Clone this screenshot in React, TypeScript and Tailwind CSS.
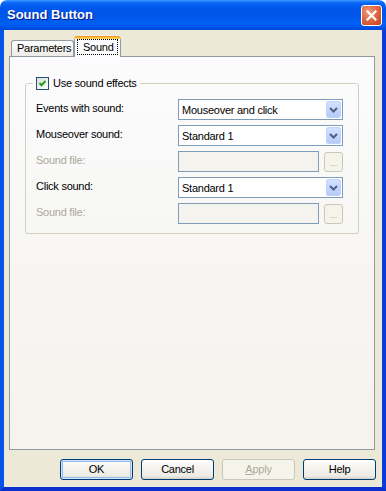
import React from "react";

const font = "font-['Liberation_Sans',Arial,sans-serif]";

function Chevron() {
  return (
    <svg width="9" height="6" viewBox="0 0 9 6">
      <polyline points="1,1 4.5,4.5 8,1" fill="none" stroke="#4D6185" strokeWidth="2" />
    </svg>
  );
}

function Combo({ value }: { value: string }) {
  return (
    <div className="h-[21px] w-[165px] border border-[#7F9DB9] bg-white flex items-center pl-[3px] pr-px">
      <span className="flex-1 text-[11px] leading-[13px] tracking-[-0.25px] text-black pt-[1px]">{value}</span>
      <div className="w-[15px] h-[17px] rounded-[2px] border border-[#C3D3FD] bg-[linear-gradient(to_bottom,#D4E1FE,#B6CBF9)] flex items-center justify-center">
        <Chevron />
      </div>
    </div>
  );
}

function FileField() {
  return (
    <div className="flex items-center">
      <div className="h-[21px] w-[141px] border border-[#7F9DB9] bg-[#F4F3EE]" />
      <div className="ml-[5px] w-[19px] h-[20px] rounded-[3px] border border-[#C9C7BA] bg-[#F5F4EA] flex items-center justify-center text-[9px] leading-[9px] text-[#ACA899] pt-[4px]">
        ...
      </div>
    </div>
  );
}

function Row({ label, disabled, children }: { label: string; disabled?: boolean; children: React.ReactNode }) {
  return (
    <div className="flex items-start h-[21px]">
      <div className={`w-[142px] pt-[3px] text-[11px] leading-[13px] tracking-[-0.25px] ${disabled ? "text-[#ACA899]" : "text-black"}`}>
        {label}
      </div>
      {children}
    </div>
  );
}

function XPButton({ children, isDefault, disabled }: { children: React.ReactNode; isDefault?: boolean; disabled?: boolean }) {
  const base = "w-[73px] h-[21px] rounded-[3px] border flex items-center justify-center text-[11px] leading-[13px] tracking-[-0.25px]";
  if (disabled) {
    return <div className={`${base} border-[#C9C7BA] bg-[#F5F4EA] text-[#ACA899]`}>{children}</div>;
  }
  return (
    <div
      className={`${base} border-[#003C74] text-black bg-[linear-gradient(to_bottom,#FFFFFF_0%,#F4F3EE_40%,#ECEBE6_85%,#D6D0C5_100%)] ${
        isDefault ? "shadow-[inset_0_0_0_1px_#CEE7FF,inset_0_0_0_2px_#98B8EA]" : ""
      }`}
    >
      {children}
    </div>
  );
}

export default function App() {
  return (
    <div className={`w-[386px] h-[491px] bg-white flex flex-col ${font}`}>
      {/* Title bar */}
      <div className="h-[30px] rounded-t-[7px] bg-[linear-gradient(to_bottom,#3D95FF_0px,#0A66F5_3px,#0058EE_7px,#0054E6_45%,#0060F4_80%,#0049DC_100%)] flex items-center justify-between pl-[7px] pr-[4px]">
        <span className="text-white font-bold text-[13px] leading-[16px] [text-shadow:1px_1px_0_#0A1883]">Sound Button</span>
        <div className="w-[21px] h-[21px] rounded-[3px] border border-white bg-[radial-gradient(circle_at_35%_30%,#F09A7C_0%,#DE6640_50%,#C2401E_100%)] flex items-center justify-center">
          <svg width="11" height="11" viewBox="0 0 11 11">
            <path d="M1.5 1.5 L9.5 9.5 M9.5 1.5 L1.5 9.5" stroke="white" strokeWidth="2.2" strokeLinecap="square" />
          </svg>
        </div>
      </div>

      {/* Body */}
      <div className="flex-1 flex flex-col bg-[#ECE9D8] border-l-4 border-r-4 border-b-4 border-l-[#0553E8] border-r-[#0A3AD8] border-b-[#0A2FCC] pt-[6px] pl-[5px] pr-[7px] pb-[7px]">
        {/* Tabs */}
        <div className="h-[20px] flex items-end pl-[2px]">
          <div className="w-[63px] h-[16px] rounded-t-[3px] border-t border-x border-[#919B9C] bg-[linear-gradient(to_bottom,#FFFFFF,#ECEBE6)] flex items-center pl-[5px] text-[11px] leading-[13px] tracking-[-0.25px] text-black">
            Parameters
          </div>
          <div className="relative z-10 -mb-px w-[47px] h-[21px] flex flex-col">
            <div className="h-[3px] rounded-t-[3px] bg-[linear-gradient(to_bottom,#E68B2C,#FFC73C_60%,#FFD563)]" />
            <div className="flex-1 border-x border-[#919B9C] bg-[#FCFCFE] px-[2px]">
              <div className="h-[16px] border border-dotted border-black flex items-center pl-[5px] text-[11px] leading-[13px] tracking-[-0.25px] text-black">
                Sound
              </div>
            </div>
          </div>
        </div>

        {/* Panel */}
        <div className="flex-1 border border-[#919B9C] bg-[linear-gradient(to_bottom,#FCFCFE,#F6F5F1_60%,#F4F3EE)] pt-[20px] px-[15px]">
          <fieldset className="border border-[#D0D0BF] rounded-[3px] pl-[10px] pr-[15px] pb-[9px]">
            <legend className="-ml-[3px] px-[3px] flex items-center h-[13px]">
              <div className="w-[13px] h-[13px] border border-[#1C5180] bg-[linear-gradient(135deg,#DCDCD7,#FFFFFF)] flex items-center justify-center">
                <svg width="9" height="9" viewBox="0 0 9 9">
                  <path d="M1.5 4 L3.5 6.3 L7.5 2" fill="none" stroke="#21A121" strokeWidth="2" />
                </svg>
              </div>
              <span className="ml-[4px] text-[11px] leading-[13px] tracking-[-0.25px] text-black">Use sound effects</span>
            </legend>
            <div className="flex flex-col gap-[5px] pt-[9px]">
              <Row label="Events with sound:">
                <Combo value="Mouseover and click" />
              </Row>
              <Row label="Mouseover sound:">
                <Combo value="Standard 1" />
              </Row>
              <Row label="Sound file:" disabled>
                <FileField />
              </Row>
              <Row label="Click sound:">
                <Combo value="Standard 1" />
              </Row>
              <Row label="Sound file:" disabled>
                <FileField />
              </Row>
            </div>
          </fieldset>
        </div>

        {/* Buttons */}
        <div className="mt-[9px] -mr-px flex justify-end gap-[8px]">
          <XPButton isDefault>OK</XPButton>
          <XPButton>Cancel</XPButton>
          <XPButton disabled>
            <span className="underline">A</span>pply
          </XPButton>
          <XPButton>Help</XPButton>
        </div>
      </div>
    </div>
  );
}
